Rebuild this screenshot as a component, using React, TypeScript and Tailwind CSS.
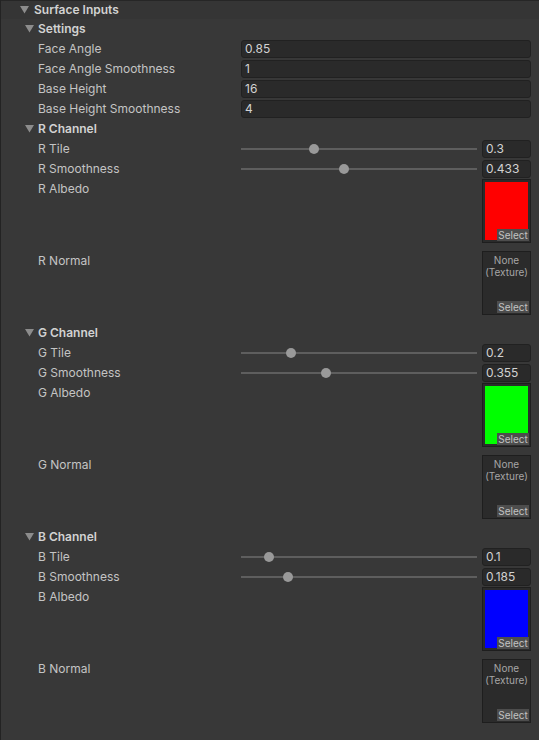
import React from "react";

const font = { fontFamily: "Inter, 'Noto Sans', sans-serif" };

const Arrow = ({ className = "" }: { className?: string }) => (
  <svg width="9" height="8" viewBox="0 0 9 8" className={className}>
    <path d="M0 0 H9 L4.5 7.5 Z" fill="#8c8c8c" />
  </svg>
);

const Foldout = ({ label }: { label: string }) => (
  <div className="flex h-[20px] items-center pl-[24px]">
    <Arrow />
    <span className="ml-[4px] text-[12px] font-semibold text-[#d2d2d2]">{label}</span>
  </div>
);

const FloatRow = ({ label, value }: { label: string; value: string }) => (
  <div className="flex h-[20px] items-center pr-[8px]">
    <span className="w-[240px] pl-[37px] text-[12px] text-[#c4c4c4]">{label}</span>
    <div className="flex h-[18px] flex-1 items-center rounded-[3px] border border-[#212121] bg-[#2a2a2a] pl-[3px] text-[12px] text-[#d2d2d2]">
      {value}
    </div>
  </div>
);

const SliderRow = ({ label, value }: { label: string; value: number }) => (
  <div className="flex h-[20px] items-center pr-[8px]">
    <span className="w-[240px] pl-[37px] text-[12px] text-[#c4c4c4]">{label}</span>
    <div className="relative h-[18px] flex-1">
      <div className="absolute left-0 right-0 top-[8px] h-[2px] bg-[#5e5e5e]" />
      <div
        className="absolute top-[4px] h-[10px] w-[10px] rounded-full bg-[#999999]"
        style={{ left: `calc(${value} * (100% - 10px))` }}
      />
    </div>
    <div className="ml-[5px] flex h-[18px] w-[49px] items-center rounded-[3px] border border-[#212121] bg-[#2a2a2a] pl-[3px] text-[12px] text-[#d2d2d2]">
      {String(value)}
    </div>
  </div>
);

const SelectBtn = () => (
  <div className="absolute bottom-[1px] right-[1px] flex h-[12px] w-[32px] items-center justify-center bg-[#4d4d4d] text-[10px] leading-none text-[#c2c2c2]">
    Select
  </div>
);

const TextureRow = ({ label, color }: { label: string; color?: string }) => (
  <div className="flex h-[72px] pr-[8px]">
    <span className="mt-[1px] flex-1 pl-[37px] text-[12px] text-[#c4c4c4]">{label}</span>
    <div className="relative h-[64px] w-[49px] border border-[#1e1e1e] bg-[#2b2b2b]">
      {color ? (
        <div className="absolute inset-[2px]" style={{ background: color }} />
      ) : (
        <div className="flex flex-col items-center pt-[2px] text-[10px] leading-[12px] text-[#a6a6a6]">
          <span>None</span>
          <span>(Texture)</span>
        </div>
      )}
      <SelectBtn />
    </div>
  </div>
);

const channels = [
  { name: "R", tile: 0.3, smooth: 0.433, color: "#ff0000" },
  { name: "G", tile: 0.2, smooth: 0.355, color: "#00ff00" },
  { name: "B", tile: 0.1, smooth: 0.185, color: "#0000ff" },
];

export default function App() {
  return (
    <div className="h-[740px] w-[539px] overflow-hidden border-l border-[#232323] bg-[#383838]" style={font}>
      <div className="flex h-[19px] items-center border-t border-[#262626] bg-[#353535] pl-[19px]">
        <Arrow />
        <span className="ml-[5px] text-[12px] font-semibold text-[#d2d2d2]">Surface Inputs</span>
      </div>
      <Foldout label="Settings" />
      <FloatRow label="Face Angle" value="0.85" />
      <FloatRow label="Face Angle Smoothness" value="1" />
      <FloatRow label="Base Height" value="16" />
      <FloatRow label="Base Height Smoothness" value="4" />
      {channels.map((c) => (
        <div key={c.name}>
          <Foldout label={`${c.name} Channel`} />
          <SliderRow label={`${c.name} Tile`} value={c.tile} />
          <SliderRow label={`${c.name} Smoothness`} value={c.smooth} />
          <TextureRow label={`${c.name} Albedo`} color={c.color} />
          <TextureRow label={`${c.name} Normal`} />
        </div>
      ))}
    </div>
  );
}
